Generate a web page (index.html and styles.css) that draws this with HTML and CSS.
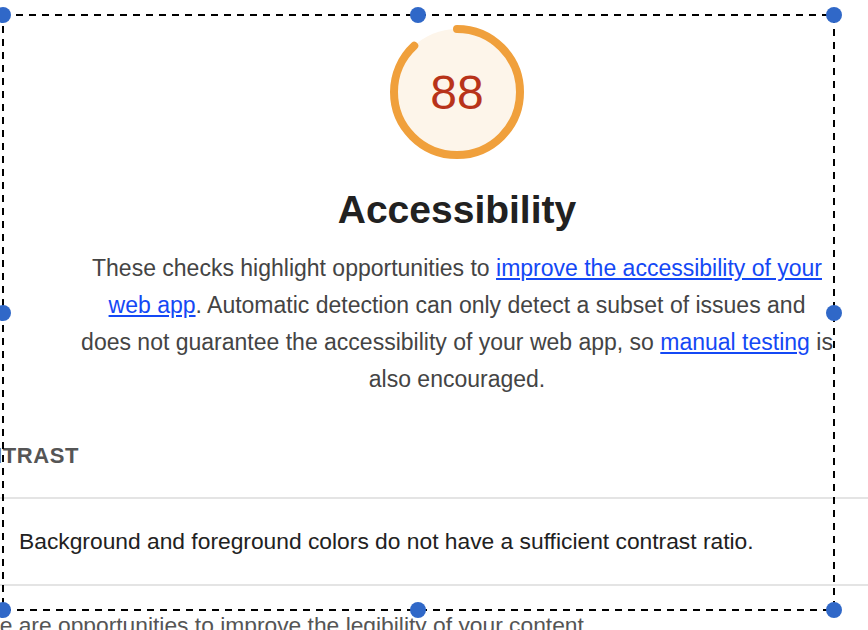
FILE: index.html
```html
<!DOCTYPE html>
<html lang="en">
<head>
<meta charset="utf-8">
<title>Accessibility</title>
<link rel="stylesheet" href="styles.css">
</head>
<body>
<div class="page">
  <section class="category">
    <div class="gauge">
      <svg class="gauge-svg" width="140" height="140" viewBox="0 0 140 140">
        <circle class="gauge-base" cx="70" cy="70" r="63"></circle>
        <circle class="gauge-arc" cx="70" cy="70" r="63" transform="rotate(-90 70 70)"></circle>
      </svg>
      <div class="gauge-value">88</div>
    </div>
    <h2 class="category-title">Accessibility</h2>
    <p class="category-desc">These checks highlight opportunities to <a href="#">improve the accessibility of your web app</a>. Automatic detection can only detect a subset of issues and <span class="nowrap">does not</span> guarantee the accessibility of your web app, so <a href="#">manual testing</a> is also encouraged.</p>
  </section>
  <section class="group">
    <div class="group-title">CONTRAST</div>
    <div class="audit">Background and foreground colors do not have a sufficient contrast ratio.</div>
    <div class="group-desc">These are opportunities to improve the legibility of your content.</div>
  </section>
  <div class="selection">
    <svg class="selection-svg" width="868" height="630" viewBox="0 0 868 630">
      <rect class="sel-rect" x="3" y="15" width="831" height="595"></rect>
      <circle class="handle" cx="3" cy="15" r="8"></circle>
      <circle class="handle" cx="418" cy="15" r="8"></circle>
      <circle class="handle" cx="834" cy="15" r="8"></circle>
      <circle class="handle" cx="3" cy="313" r="8"></circle>
      <circle class="handle" cx="834" cy="313" r="8"></circle>
      <circle class="handle" cx="3" cy="610" r="8"></circle>
      <circle class="handle" cx="418" cy="610" r="8"></circle>
      <circle class="handle" cx="834" cy="610" r="8"></circle>
    </svg>
  </div>
</div>
</body>
</html>
```
FILE: styles.css
```css
html, body {
  margin: 0;
  padding: 0;
  background: #fff;
}
body {
  font-family: "Liberation Sans", Arial, Helvetica, sans-serif;
  overflow: hidden;
}
.page {
  position: relative;
  width: 868px;
  height: 630px;
  overflow: hidden;
}
.category {
  display: flex;
  flex-direction: column;
  align-items: center;
  padding-left: 46px;
  padding-top: 22px;
}
.gauge {
  position: relative;
  width: 140px;
  height: 140px;
}
.gauge-svg {
  display: block;
}
.gauge-base {
  fill: #fdf5ea;
  stroke: none;
}
.gauge-arc {
  fill: none;
  stroke: #f0a03c;
  stroke-width: 8;
  stroke-linecap: round;
  stroke-dasharray: 348.3 395.8;
}
.gauge-value {
  position: absolute;
  inset: 0;
  display: flex;
  align-items: center;
  justify-content: center;
  font-size: 48px;
  color: #b8331a;
}
.category-title {
  margin: 25px 0 0;
  font-size: 39px;
  line-height: 46px;
  font-weight: 700;
  color: #212121;
}
.category-desc {
  margin: 17px 0 0;
  width: 758px;
  text-align: center;
  font-size: 23px;
  line-height: 37px;
  color: #444;
}
.category-desc a {
  color: #1448f5;
  text-decoration: underline;
}
.nowrap {
  white-space: nowrap;
}
.group {
  margin-top: 46px;
}
.group-title {
  margin-left: -48px;
  font-size: 22px;
  line-height: 24px;
  font-weight: 700;
  letter-spacing: 0.6px;
  color: #555;
  padding-bottom: 29px;
  border-bottom: 2px solid #e4e4e4;
}
.audit {
  padding: 0 0 0 19px;
  height: 85px;
  display: flex;
  align-items: center;
  font-size: 22.8px;
  color: #212121;
  border-bottom: 2px solid #e4e4e4;
}
.group-desc {
  margin: 27px 0 0 -51px;
  font-size: 22.8px;
  line-height: 24px;
  color: #555;
  white-space: nowrap;
}
.selection {
  position: absolute;
  left: 0;
  top: 0;
  width: 868px;
  height: 630px;
  pointer-events: none;
}
.selection-svg {
  display: block;
}
.sel-rect {
  fill: none;
  stroke: #000;
  stroke-width: 2;
  stroke-dasharray: 7 6;
}
.handle {
  fill: #3068c8;
}
```
